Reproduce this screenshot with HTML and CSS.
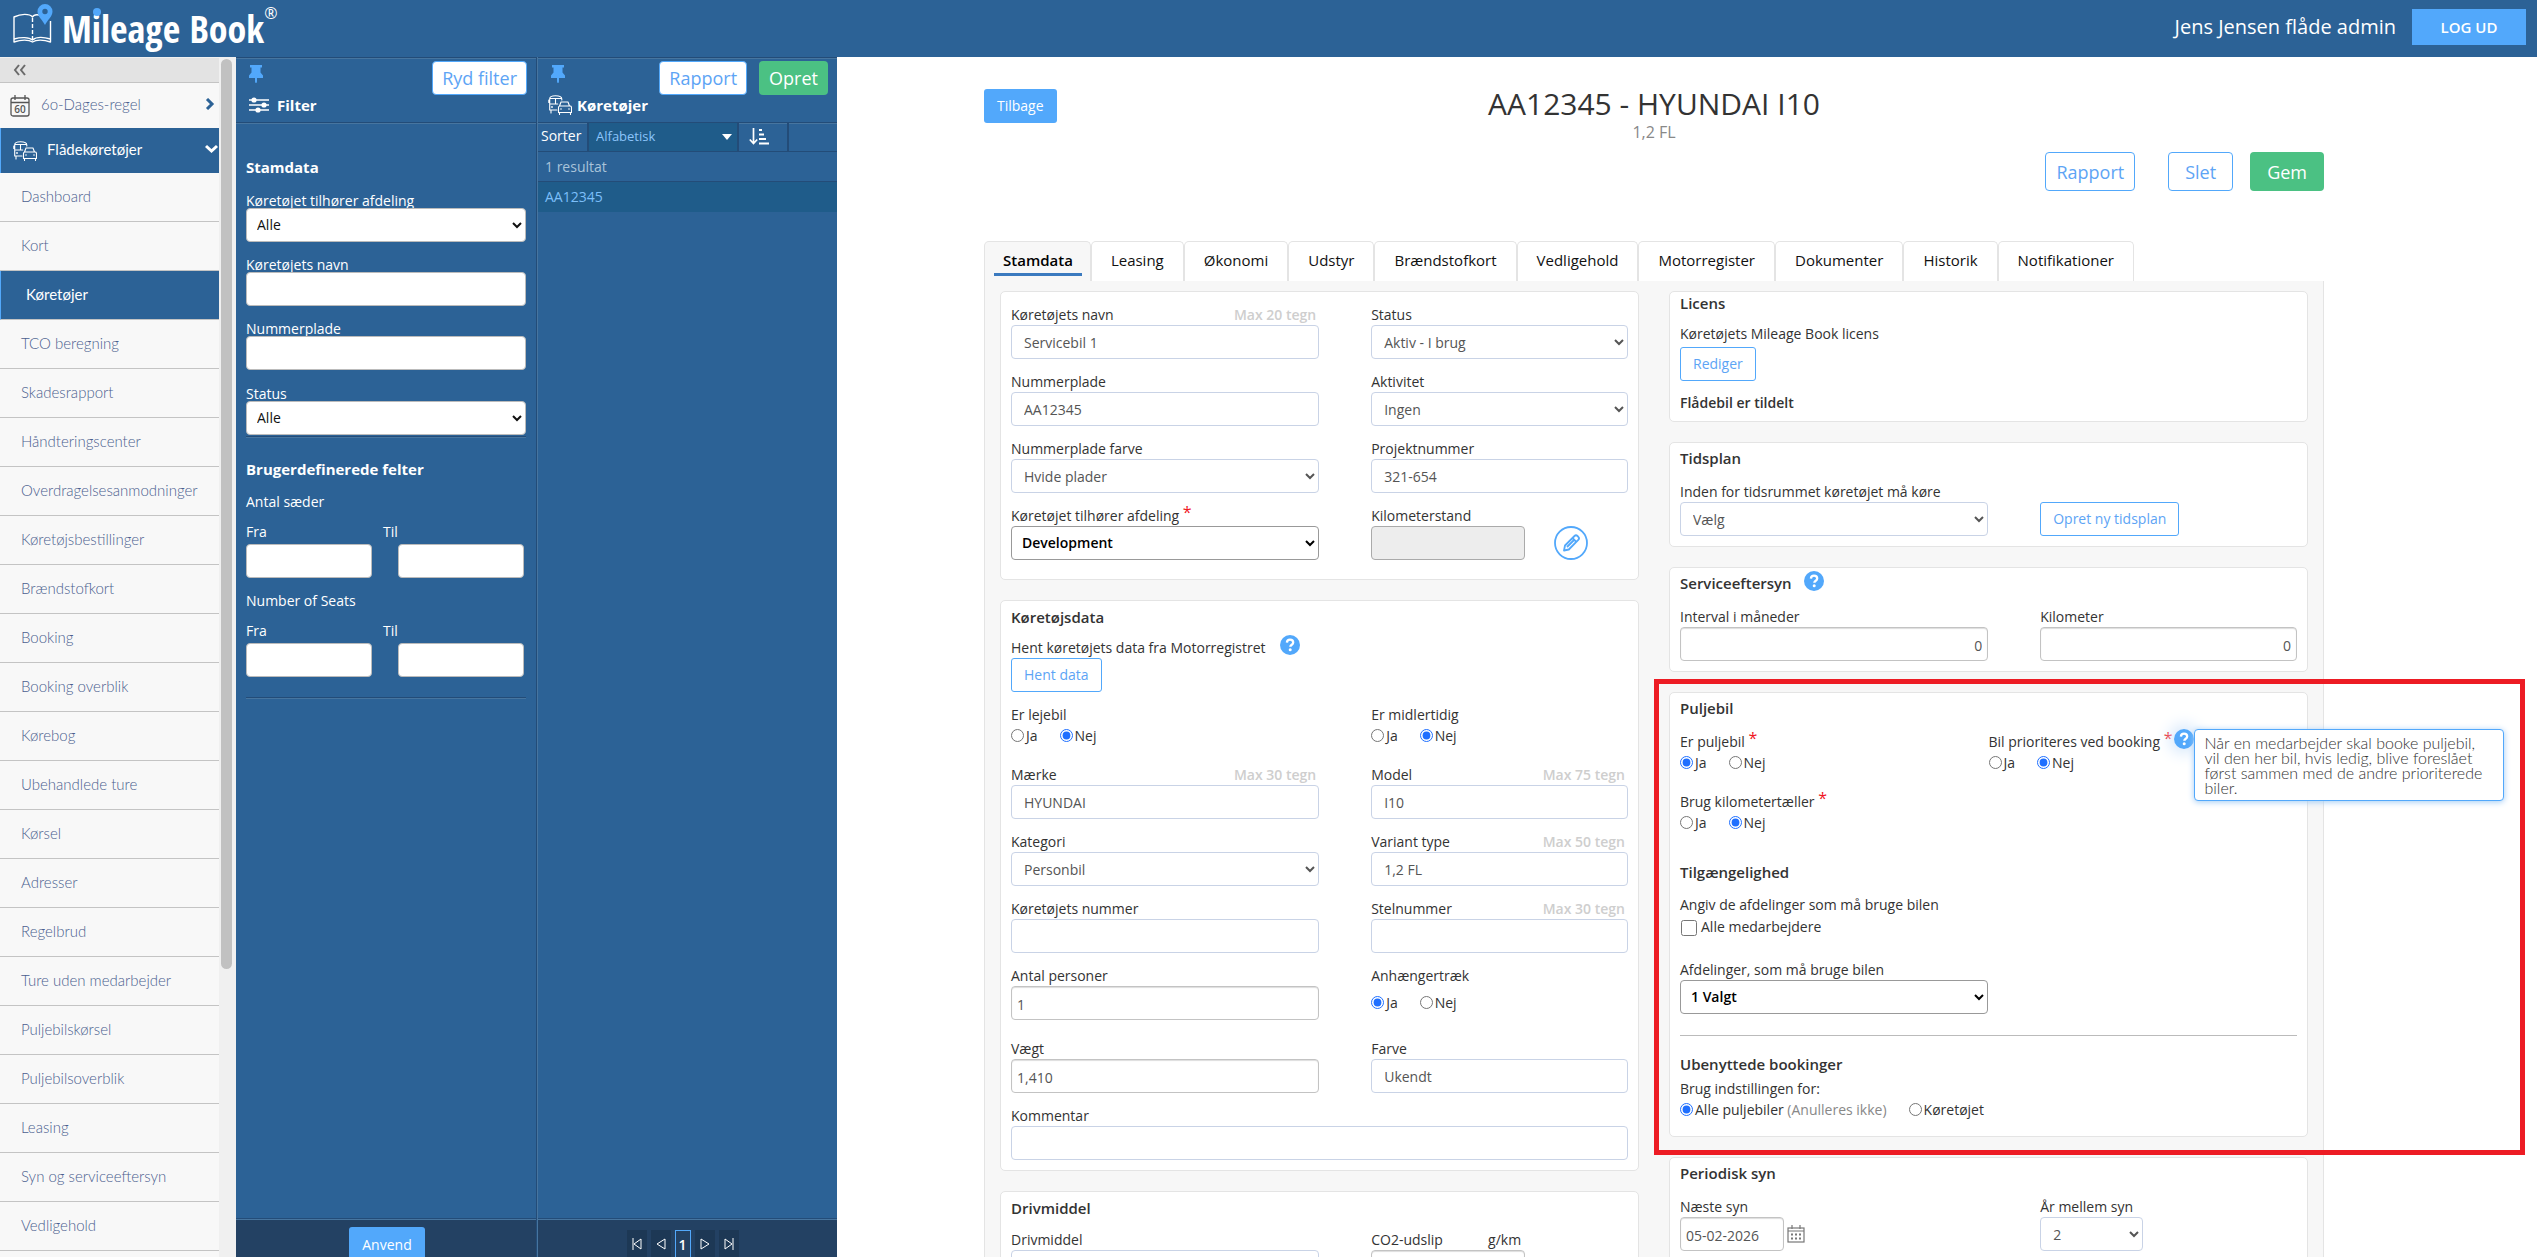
FILE: index.html
```html
<!DOCTYPE html>
<html lang="da">
<head>
<meta charset="utf-8">
<title>Mileage Book - Køretøjer</title>
<meta name="viewport" content="width=device-width, initial-scale=1">
<link rel="stylesheet" href="styles.css">
</head>
<body>
<svg class="defs" aria-hidden="true">
  <symbol id="i-pin" viewBox="0 0 14 18"><path d="M1 0h12v2.500h-1.500v5L14 10.500V13H8v3.500L7.500 18h-1L6 16.500V13H0v-2.500l2.500-3v-5H1z" fill="currentColor"/></symbol>
  <symbol id="i-fleet" viewBox="0 0 24 20"><g fill="none" stroke="currentColor" stroke-width="1.100" stroke-linejoin="round" stroke-linecap="round"><path d="M9 15H1.700V4C1.700 1.500 3 .8 7.500 .8s6.300.7 6.300 3.200V5M1.700 3.500h12M1.700 9h8M7.500 3.500V9M3 15v3M.8 5v2.500"/><path d="M11.500 11l1.500-4h7l1.500 4M10.500 17.500v-5c0-1 .5-1.500 1.500-1.500h10c1 0 1.500.5 1.500 1.500v5zM11.500 18v1.400M22.500 18v1.400"/></g><circle cx="4" cy="12" r=".9" fill="currentColor"/><circle cx="13" cy="14" r=".8" fill="currentColor"/><circle cx="21" cy="14" r=".8" fill="currentColor"/></symbol>
  <symbol id="i-help" viewBox="0 0 20 20"><circle cx="10" cy="10" r="10" fill="#52a8fb"/><path d="M6.900 7.600C7 5.600 8.300 4.700 10 4.700c1.800 0 3.200 1 3.200 2.700 0 2.300-2.900 2.300-2.900 4.400" fill="none" stroke="#fff" stroke-width="2.300"/><circle cx="10.200" cy="14.700" r="1.500" fill="#fff"/></symbol>
</svg>

<header class="topbar">
  <a class="brand" href="#">
    <svg class="brand-mark" viewBox="0 0 40 42" aria-hidden="true">
      <g fill="none" stroke="#fff" stroke-width="1.400" stroke-linejoin="round"><path d="M26 12c-3-.5-5.500 0-6.500 2C16.500 10.500 8 10.500 1 14v25c7-2.500 15-2.500 18.500 0 3.500-2.500 11-2.500 18 0V18"/><path d="M1 36c7-2 15-2 18.500 1 3.500-3 11-3 18-1"/><path d="M19.500 15v21" stroke-dasharray="4 2"/></g>
      <path d="M32 1a7.500 7.500 0 0 0-7.500 7.500C24.500 13.500 29.500 17 32 22c2.500-5 7.500-8.500 7.500-13.500A7.500 7.500 0 0 0 32 1zm0 10.200a2.700 2.700 0 1 1 0-5.400 2.700 2.700 0 0 1 0 5.400z" fill="#52a8fb"/>
    </svg>
    <span class="brand-name">M<span class="brand-i">i</span>leage Book</span><span class="brand-reg">®</span>
  </a>
  <div class="user">
    <span class="user-name">Jens Jensen flåde admin</span>
    <button class="logout" type="button">LOG UD</button>
  </div>
</header>

<div class="shell">
  <nav class="sidebar">
    <div class="menu">
      <button class="collapse" type="button" aria-label="Skjul menu"><svg width="14" height="12" viewBox="0 0 14 12"><path d="M6 1L2 6l4 5M12 1L8 6l4 5" fill="none" stroke="#6b6b6b" stroke-width="2"/></svg></button>
      <a class="group" href="#">
        <svg class="cal60" viewBox="0 0 20 22" aria-hidden="true"><g fill="none" stroke="#555" stroke-width="1.300"><rect x="1" y="3" width="18" height="18" rx="2"/><path d="M1 7.500h18M5 0v5M15 0v5"/></g><text x="10" y="18" text-anchor="middle" class="cal-text">60</text></svg>
        <span>6o-Dages-regel</span>
        <svg class="chev" width="10" height="12" viewBox="0 0 10 12"><path d="M2 1l5 5-5 5" fill="none" stroke="#2c6296" stroke-width="3"/></svg>
      </a>
      <a class="group open" href="#">
        <svg class="fleet" width="24" height="20"><use href="#i-fleet"/></svg>
        <span>Flådekøretøjer</span>
        <svg class="chev" width="13" height="10" viewBox="0 0 13 10"><path d="M1 2l5.500 5L12 2" fill="none" stroke="#fff" stroke-width="3"/></svg>
      </a>
      <a class="item" href="#">Dashboard</a>
      <a class="item" href="#">Kort</a>
      <a class="item current" href="#">Køretøjer</a>
      <a class="item" href="#">TCO beregning</a>
      <a class="item" href="#">Skadesrapport</a>
      <a class="item" href="#">Håndteringscenter</a>
      <a class="item" href="#">Overdragelsesanmodninger</a>
      <a class="item" href="#">Køretøjsbestillinger</a>
      <a class="item" href="#">Brændstofkort</a>
      <a class="item" href="#">Booking</a>
      <a class="item" href="#">Booking overblik</a>
      <a class="item" href="#">Kørebog</a>
      <a class="item" href="#">Ubehandlede ture</a>
      <a class="item" href="#">Kørsel</a>
      <a class="item" href="#">Adresser</a>
      <a class="item" href="#">Regelbrud</a>
      <a class="item" href="#">Ture uden medarbejder</a>
      <a class="item" href="#">Puljebilskørsel</a>
      <a class="item" href="#">Puljebilsoverblik</a>
      <a class="item" href="#">Leasing</a>
      <a class="item" href="#">Syn og serviceeftersyn</a>
      <a class="item" href="#">Vedligehold</a>
      <a class="item" href="#"></a>
    </div>
    <div class="track"><div class="thumb"></div></div>
  </nav>

  <aside class="pane filter">
    <div class="pane-head">
      <div class="pane-tools"><svg class="pin" width="14" height="18"><use href="#i-pin"/></svg><button class="btn outline large" type="button">Ryd filter</button></div>
      <h2><svg width="20" height="16" viewBox="0 0 20 16" aria-hidden="true"><path d="M0 3h20M0 8h20M0 13h20" stroke="#fff" stroke-width="1.500"/><circle cx="5" cy="3" r="2.600" fill="#fff"/><circle cx="15" cy="8" r="2.600" fill="#fff"/><circle cx="9" cy="13" r="2.600" fill="#fff"/></svg>Filter</h2>
    </div>
    <div class="pane-body">
      <h3>Stamdata</h3>
      <div class="ffield"><label for="f-afd">Køretøjet tilhører afdeling</label><select id="f-afd"><option>Alle</option></select></div>
      <div class="ffield"><label for="f-navn">Køretøjets navn</label><input id="f-navn" type="text"></div>
      <div class="ffield"><label for="f-nr">Nummerplade</label><input id="f-nr" type="text"></div>
      <div class="ffield last"><label for="f-st">Status</label><select id="f-st"><option>Alle</option></select></div>
      <hr>
      <h3 class="custom">Brugerdefinerede felter</h3>
      <fieldset class="range"><legend>Antal sæder</legend>
        <div class="range-row"><label for="a-fra">Fra</label><label for="a-til">Til</label></div>
        <div class="range-inputs"><input id="a-fra" type="text"><input id="a-til" type="text"></div>
      </fieldset>
      <fieldset class="range"><legend>Number of Seats</legend>
        <div class="range-row"><label for="b-fra">Fra</label><label for="b-til">Til</label></div>
        <div class="range-inputs"><input id="b-fra" type="text"><input id="b-til" type="text"></div>
      </fieldset>
      <hr class="end">
    </div>
    <div class="pane-foot"><button class="btn solid apply" type="button">Anvend</button></div>
  </aside>

  <aside class="pane list">
    <div class="pane-head">
      <div class="pane-tools"><svg class="pin" width="14" height="18"><use href="#i-pin"/></svg><button class="btn outline large" type="button">Rapport</button><button class="btn green large" type="button">Opret</button></div>
      <h2 class="tight"><svg width="24" height="20"><use href="#i-fleet"/></svg>Køretøjer</h2>
    </div>
    <div class="sortbar">
      <label for="sort">Sorter</label>
      <span class="sortselect"><select id="sort"><option>Alfabetisk</option></select></span>
      <button class="sortdir" type="button" aria-label="Sorteringsretning"><svg width="20" height="18" viewBox="0 0 20 18"><path d="M4.500 0v15M.8 11.500l3.700 4 3.700-4" fill="none" stroke="#fff" stroke-width="1.700"/><path d="M10 2h3M10 6.500h5M10 11h7M10 15.500h10" stroke="#fff" stroke-width="2"/></svg></button>
    </div>
    <div class="count">1 resultat</div>
    <a class="result" href="#">AA12345</a>
    <div class="pane-body"></div>
    <div class="pane-foot pager">
      <button type="button" aria-label="Første"><svg width="10" height="12" viewBox="0 0 10 12"><path d="M1 0v12M9 1v10L2 6z"/></svg></button>
      <button type="button" aria-label="Forrige"><svg width="10" height="12" viewBox="0 0 10 12"><path d="M9 1v10L1 6z"/></svg></button>
      <button class="on" type="button">1</button>
      <button type="button" aria-label="Næste"><svg width="10" height="12" viewBox="0 0 10 12"><path d="M1 1v10l8-5z"/></svg></button>
      <button type="button" aria-label="Sidste"><svg width="10" height="12" viewBox="0 0 10 12"><path d="M9 0v12M1 1v10l7-5z"/></svg></button>
    </div>
  </aside>

  <main class="main">
    <div class="title-row">
      <button class="btn solid back" type="button">Tilbage</button>
      <div class="titles"><h1>AA12345 - HYUNDAI I10</h1><p>1,2 FL</p></div>
    </div>
    <div class="actions">
      <button class="btn outline large" type="button">Rapport</button>
      <button class="btn outline large slet" type="button">Slet</button>
      <button class="btn green large gem" type="button">Gem</button>
    </div>

    <div class="tabs">
      <a class="tab active" href="#"><span>Stamdata</span></a>
      <a class="tab" href="#">Leasing</a>
      <a class="tab" href="#">Økonomi</a>
      <a class="tab" href="#">Udstyr</a>
      <a class="tab" href="#">Brændstofkort</a>
      <a class="tab" href="#">Vedligehold</a>
      <a class="tab" href="#">Motorregister</a>
      <a class="tab" href="#">Dokumenter</a>
      <a class="tab" href="#">Historik</a>
      <a class="tab" href="#">Notifikationer</a>
    </div>

    <div class="panel">
      <div class="col">
        <section class="card basics">
          <div class="row">
            <div class="field"><div class="lab"><label for="navn">Køretøjets navn</label><span class="max">Max 20 tegn</span></div><input id="navn" type="text" value="Servicebil 1"></div>
            <div class="field"><label for="status">Status</label><select id="status"><option>Aktiv - I brug</option></select></div>
          </div>
          <div class="row">
            <div class="field"><label for="plade">Nummerplade</label><input id="plade" type="text" value="AA12345"></div>
            <div class="field"><label for="akt">Aktivitet</label><select id="akt"><option>Ingen</option></select></div>
          </div>
          <div class="row">
            <div class="field"><label for="pfarve">Nummerplade farve</label><select id="pfarve"><option>Hvide plader</option></select></div>
            <div class="field"><label for="proj">Projektnummer</label><input id="proj" type="text" value="321-654"></div>
          </div>
          <div class="row">
            <div class="field"><label for="afd">Køretøjet tilhører afdeling <b class="req">*</b></label><select id="afd" class="strong"><option>Development</option></select></div>
            <div class="field"><label for="km">Kilometerstand</label><div class="km"><input id="km" type="text" disabled><button class="edit" type="button" aria-label="Rediger kilometerstand"><svg width="34" height="34" viewBox="0 0 34 34"><circle cx="17" cy="17" r="16" fill="none" stroke="#52a8fb" stroke-width="1.800"/><g fill="none" stroke="#52a8fb" stroke-width="1.800" stroke-linejoin="round"><path d="M10 24.500l1-5L20.500 10c1-1 2-1 3 0l.8.800c1 1 1 2 0 3L14.800 23.500z"/><path d="M18.500 12l3.800 3.800M13 21l7-7"/></g></svg></button></div></div>
          </div>
        </section>

        <section class="card vehicle">
          <h4>Køretøjsdata</h4>
          <div class="fetch"><div class="lab-help">Hent køretøjets data fra Motorregistret <svg class="help" width="20" height="20"><use href="#i-help"/></svg></div><button class="btn outline" type="button">Hent data</button></div>
          <div class="row choice">
            <fieldset><legend>Er lejebil</legend><div class="radios"><label><input type="radio" name="leje">Ja</label><label><input type="radio" name="leje" checked>Nej</label></div></fieldset>
            <fieldset><legend>Er midlertidig</legend><div class="radios"><label><input type="radio" name="midl">Ja</label><label><input type="radio" name="midl" checked>Nej</label></div></fieldset>
          </div>
          <div class="row">
            <div class="field"><div class="lab"><label for="maerke">Mærke</label><span class="max">Max 30 tegn</span></div><input id="maerke" type="text" value="HYUNDAI"></div>
            <div class="field"><div class="lab"><label for="model">Model</label><span class="max">Max 75 tegn</span></div><input id="model" type="text" value="I10"></div>
          </div>
          <div class="row">
            <div class="field"><label for="kat">Kategori</label><select id="kat"><option>Personbil</option></select></div>
            <div class="field"><div class="lab"><label for="variant">Variant type</label><span class="max">Max 50 tegn</span></div><input id="variant" type="text" value="1,2 FL"></div>
          </div>
          <div class="row">
            <div class="field"><label for="knr">Køretøjets nummer</label><input id="knr" type="text"></div>
            <div class="field"><div class="lab"><label for="stel">Stelnummer</label><span class="max">Max 30 tegn</span></div><input id="stel" type="text"></div>
          </div>
          <div class="row persons">
            <div class="field"><label for="pers">Antal personer</label><input id="pers" class="num" type="text" value="1"></div>
            <fieldset class="tow"><legend>Anhængertræk</legend><div class="radios"><label><input type="radio" name="traek" checked>Ja</label><label><input type="radio" name="traek">Nej</label></div></fieldset>
          </div>
          <div class="row">
            <div class="field"><label for="vaegt">Vægt</label><input id="vaegt" class="num" type="text" value="1,410"></div>
            <div class="field"><label for="farve">Farve</label><input id="farve" type="text" value="Ukendt"></div>
          </div>
          <div class="field"><label for="komm">Kommentar</label><input id="komm" type="text"></div>
        </section>

        <section class="card fuel">
          <h4>Drivmiddel</h4>
          <div class="row">
            <div class="field"><label for="driv">Drivmiddel</label><select id="driv"><option></option></select></div>
            <div class="field co2"><div class="lab"><label for="co2">CO2-udslip</label><span>g/km</span></div><input id="co2" class="num" type="text"></div>
          </div>
        </section>
      </div>

      <div class="col">
        <section class="card licens">
          <h4>Licens</h4>
          <p>Køretøjets Mileage Book licens</p>
          <button class="btn outline" type="button">Rediger</button>
          <p class="granted">Flådebil er tildelt</p>
        </section>

        <section class="card short">
          <h4>Tidsplan</h4>
          <div class="row">
            <div class="field"><label for="tid">Inden for tidsrummet køretøjet må køre</label><select id="tid"><option>Vælg</option></select></div>
            <div class="bottom"><button class="btn outline" type="button">Opret ny tidsplan</button></div>
          </div>
        </section>

        <section class="card short">
          <h4>Serviceeftersyn <svg class="help" width="20" height="20"><use href="#i-help"/></svg></h4>
          <div class="row">
            <div class="field"><label for="intv">Interval i måneder</label><input id="intv" class="num right" type="text" value="0"></div>
            <div class="field"><label for="kilo">Kilometer</label><input id="kilo" class="num right" type="text" value="0"></div>
          </div>
        </section>

        <section class="card pool">
          <h4>Puljebil</h4>
          <div class="halves">
            <fieldset><legend>Er puljebil <b class="req">*</b></legend><div class="radios"><label><input type="radio" name="pulje" checked>Ja</label><label><input type="radio" name="pulje">Nej</label></div></fieldset>
            <fieldset><legend>Bil prioriteres ved booking <b class="req">*</b><span class="tip-anchor"><svg class="help" width="20" height="20"><use href="#i-help"/></svg><span class="tip" role="tooltip">Når en medarbejder skal booke puljebil, vil den her bil, hvis ledig, blive foreslået først sammen med de andre prioriterede biler.</span></span></legend><div class="radios"><label><input type="radio" name="prio">Ja</label><label><input type="radio" name="prio" checked>Nej</label></div></fieldset>
            <fieldset><legend>Brug kilometertæller <b class="req">*</b></legend><div class="radios"><label><input type="radio" name="kmt">Ja</label><label><input type="radio" name="kmt" checked>Nej</label></div></fieldset>
          </div>
          <h4 class="access">Tilgængelighed</h4>
          <p>Angiv de afdelinger som må bruge bilen</p>
          <label class="check"><input type="checkbox">Alle medarbejdere</label>
          <div class="row"><div class="field"><label for="afds">Afdelinger, som må bruge bilen</label><select id="afds" class="strong"><option>1 Valgt</option></select></div></div>
          <hr>
          <h4>Ubenyttede bookinger</h4>
          <p>Brug indstillingen for:</p>
          <div class="radios"><label><input type="radio" name="ubn" checked><span>Alle puljebiler <span class="muted">(Anulleres ikke)</span></span></label><label><input type="radio" name="ubn">Køretøjet</label></div>
          <div class="marker"></div>
        </section>

        <section class="card short">
          <h4>Periodisk syn</h4>
          <div class="row">
            <div class="field date"><label for="syn">Næste syn</label><div class="datebox"><input id="syn" class="num" type="text" value="05-02-2026"><svg width="18" height="18" viewBox="0 0 18 18" aria-hidden="true"><g fill="none" stroke="#777" stroke-width="1.200"><rect x="1" y="3" width="16" height="14"/><path d="M1 6h16M5 0v4M13 0v4"/></g><path d="M4 9.500h10M4 13.500h10" stroke="#777" stroke-width="2" stroke-dasharray="2 2"/></svg></div></div>
            <div class="field years"><label for="aar">År mellem syn</label><select id="aar"><option>2</option></select></div>
          </div>
        </section>
      </div>
    </div>
  </main>
</div>
</body>
</html>
```

FILE: styles.css
```css
*, *::before, *::after { box-sizing: border-box; }

:root {
  --navy: #2c6296;
  --sky: #52a8fb;
  --green: #4bc183;
  --dark-line: #234c78;
  --light-line: #47759f;
}

body {
  margin: 0;
  height: 100vh;
  display: flex;
  flex-direction: column;
  overflow: hidden;
  font: 14px/20px "Open Sans", "Noto Sans", sans-serif;
  color: #333;
  background: #fff;
}

h1, h2, h3, h4, p { margin: 0; font-weight: 400; }
fieldset { margin: 0; padding: 0; border: 0; min-width: 0; }
legend { padding: 0; display: block; height: 20px; white-space: nowrap; }
button, input, select { font: inherit; color: inherit; }
button { cursor: pointer; }
a { text-decoration: none; color: inherit; }
svg { flex: none; }
.defs { position: absolute; width: 0; height: 0; }

/* top bar */
.topbar {
  flex: none;
  height: 57px;
  padding: 0 11px 0 13px;
  display: flex;
  justify-content: space-between;
  background: var(--navy);
  color: #fff;
}
.brand { display: flex; align-items: flex-start; }
.brand-mark { width: 40px; height: 42px; margin-top: 3px; }
.brand-name {
  margin-left: 9px;
  font: 700 38px/56px "Open Sans Condensed", "Liberation Sans Narrow", "Lato", sans-serif;
  white-space: nowrap;
}
.brand-i { position: relative; }
.brand-i::before {
  content: "";
  position: absolute;
  left: 1px;
  top: 6px;
  width: 8px;
  height: 8px;
  border-radius: 50%;
  background: var(--sky);
}
.brand-reg { font: 16px/26px "Open Sans", sans-serif; }
.user { display: flex; align-items: flex-start; gap: 16px; padding-top: 9px; }
.user-name { font-size: 20px; line-height: 36px; }
.logout { width: 114px; height: 36px; border: 0; background: var(--sky); color: #fff; font-weight: 600; font-size: 15px; }

/* layout */
.shell { flex: 1; min-height: 0; display: flex; }

/* menu */
.sidebar { flex: none; width: 236px; display: flex; overflow: hidden; background: #f0f0f0; }
.menu { flex: 1; min-width: 0; padding-top: 1px; font: 300 15px/20px "Lato", sans-serif; color: #4b5f8f; }
.track { flex: none; width: 17px; padding: 2px 4px 0 2px; }
.thumb { height: 76%; border-radius: 6px; background: #c1c1c1; }
.collapse { display: flex; align-items: center; width: 100%; height: 25px; padding: 0 13px; border: 0; border-bottom: 1px solid #c4c4c4; background: #e3e3e3; }
.group { display: flex; align-items: center; height: 45px; padding: 0 4px 3px 10px; background: #f8f8f8; }
.group span { flex: 1; font-size: 15px; }
.cal60 { width: 20px; height: 22px; margin: 4px 11px 0 0; }
.cal-text { font: 600 10px "Open Sans", sans-serif; fill: #555; }
.fleet { margin: 3px 10px 0 0; }
.group.open { padding-right: 1px; border-left: 1px solid var(--sky); background: var(--navy); color: #fff; font-weight: 400; }
.group.open svg.fleet { margin-left: 2px; }
.item { display: block; height: 49px; padding: 13px 0 0 21px; border-bottom: 1px solid #c4c4c4; background: #f8f8f8; white-space: nowrap; }
.item.current { padding-left: 25px; border-left: 1px solid var(--sky); background: var(--navy); color: #fff; font-weight: 400; }

/* blue panes */
.pane { flex: none; display: flex; flex-direction: column; background: var(--navy); color: #fff; }
.filter { width: 301px; border-right: 1px solid var(--dark-line); }
.list { width: 300px; border-left: 1px solid var(--light-line); }
.pane-head { flex: none; height: 66px; padding: 3px 9px 0 13px; border-top: 1px solid var(--dark-line); border-bottom: 1px solid var(--dark-line); box-shadow: inset 0 1px var(--light-line), 0 1px var(--light-line); }
.pane-tools { display: flex; align-items: flex-start; height: 34px; gap: 12px; }
.pin { margin: 4px auto 0 0; color: var(--sky); }
.pane h2 { display: flex; align-items: center; gap: 8px; height: 20px; font-size: 15px; font-weight: 700; }
.pane h2.tight { gap: 5px; margin-left: -3px; }
.pane-body { flex: 1; min-height: 0; overflow: hidden; padding: 34px 10px 0 10px; }
.pane h3 { height: 20px; font-size: 15px; line-height: 20px; font-weight: 700; }
.pane h3.custom { margin-top: 21px; }
.ffield { display: flex; flex-direction: column; height: 64px; }
.pane h3 + .ffield { margin-top: 13px; }
.ffield.last { height: 53px; margin-top: 1px; }
.ffield label { height: 18px; line-height: 22px; }
.ffield input, .ffield select, .range input { width: 100%; height: 34px; border: 1px solid #bbb; border-radius: 4px; background: #fff; color: #111; }
.ffield select { padding: 0 0 2px 6px; }
.pane hr { margin: 0; height: 2px; border: 0; border-top: 1px solid var(--dark-line); background: var(--light-line); }
.pane hr.end { margin-top: 20px; }
.range { margin-top: 13px; }
.range-row { display: grid; grid-template-columns: 137px 1fr; padding-top: 10px; height: 32px; }
.range-inputs { display: grid; grid-template-columns: 1fr 1fr; gap: 26px; padding-right: 2px; }
.pane-foot { flex: none; height: 39px; border-top: 1px solid var(--dark-line); box-shadow: inset 0 1px var(--light-line); background: #234163; padding: 8px 0 0 2px; display: flex; justify-content: center; align-items: flex-start; overflow: hidden; }
.sortbar { flex: none; display: flex; height: 29px; border-bottom: 1px solid var(--dark-line); }
.sortbar label { width: 49px; padding-left: 3px; line-height: 25px; }
.sortselect { position: relative; width: 152px; border: solid var(--dark-line); border-width: 0 2px; background: #1f5c8a; }
.sortselect::after { content: ""; position: absolute; right: 5px; top: 11px; border: 5px solid transparent; border-top: 6px solid #fff; border-bottom: 0; }
.sortselect select { appearance: none; width: 100%; height: 25px; padding: 0 7px; border: 0; background: transparent; color: #8cc5fb; font-size: 13px; }
.sortdir { width: 50px; padding: 4px 0 0 10px; border: 0; border-right: 2px solid var(--dark-line); background: none; text-align: left; }
.count, .result { flex: none; height: 30px; padding-left: 7px; line-height: 30px; }
.count { border-bottom: 1px solid var(--dark-line); color: #a9c4da; }
.result { background: #1f5c8a; color: #7cbff9; }
.pager { gap: 4px; padding: 11px 10px 0 0; }
.pager button { width: 20px; height: 30px; padding: 0; border: 0; background: #1d3855; color: #fff; }
.pager button.on { width: 16px; border: 1px solid var(--sky); background: none; font-weight: 600; }
.pager path { fill: none; stroke: #fff; stroke-width: 1; }

/* buttons */
.btn { height: 34px; padding: 0 12px; border: 1px solid transparent; border-radius: 3px; font-size: 14px; white-space: nowrap; }
.btn.large { font-size: 18px; padding: 0 10px; border-radius: 4px; }
.pane .btn.large { height: 34px; line-height: 28px; padding: 0 9px; }
.btn.outline { border-color: var(--sky); background: #fff; color: #5da4f5; }
.btn.solid { background: var(--sky); color: #fff; }
.btn.green { background: var(--green); color: #fff; }
.pane .btn.apply { height: 36px; padding: 0 12px; }

/* main form */
.main { flex: 1; min-width: 0; overflow-y: auto; scrollbar-width: none; padding: 32px 213px 0 147px; }
.title-row { height: 63px; }
.titles { text-align: center; margin-top: -34px; }
.titles h1 { font-size: 30px; line-height: 30px; }
.titles p { font-size: 16px; line-height: 26px; color: #888; }
.actions { display: flex; justify-content: flex-end; height: 39px; }
.actions .btn { height: 39px; }
.actions .slet { margin: 0 17px 0 33px; padding: 0 16px; }
.actions .gem { padding: 0 16px; }
.tabs { display: flex; margin-top: 50px; height: 40px; }
.tab { padding: 8px 19px 0; border: 1px solid #e4e4e4; border-bottom: 0; border-radius: 5px 5px 0 0; font-size: 15px; color: #111; white-space: nowrap; }
.tab.active { padding: 8px 8px 0 9px; background: #f7f7f7; font-weight: 600; color: #000; }
.tab.active span { display: block; height: 26px; padding: 0 9px; border-bottom: 3px solid #3b7abf; }
.panel { display: grid; grid-template-columns: 1fr 1fr; gap: 30px; padding: 10px 15px; border: solid #e4e4e4; border-width: 0 1px; background: #f7f7f7; }
.col { display: flex; flex-direction: column; gap: 20px; min-width: 0; }
.card { position: relative; padding: 6px 10px 10px; border: 1px solid #e4e4e4; border-radius: 5px; background: #fff; }
.card.basics { padding: 13px 10px 6px; }
.card h4 { display: flex; align-items: center; gap: 12px; height: 20px; font-size: 15px; font-weight: 600; }
.row { display: grid; grid-template-columns: 6fr 5fr; column-gap: 52px; height: 67px; }
.field { display: flex; flex-direction: column; min-width: 0; height: 54px; }
.field > label, .lab { height: 20px; white-space: nowrap; }
.lab { display: flex; justify-content: space-between; }
.max { padding-right: 3px; color: #cecece; font-weight: 600; }
.req { color: #f0141e; font-weight: 400; font-size: 16px; line-height: 10px; vertical-align: 3px; }
.field input, .field select { width: 100%; height: 34px; border: 1px solid #c9d3e6; border-radius: 4px; background: #fff; color: #555; padding: 0 12px; }
.field select { padding: 0 0 0 8px; }
.field input.num { padding: 2px 5px 0; border-color: #c3c3c3; box-shadow: inset 0 1px 1px #ddd; }
.field input.right { text-align: right; }
.field select.strong { border-color: #999; color: #000; font-weight: 600; padding: 0 0 2px 6px; }
.km { display: flex; gap: 29px; }
.field .km input { width: 154px; border-color: #aaa; background: #ededed; }
.edit { width: 34px; height: 34px; padding: 0; border: 0; background: none; }
.vehicle .fetch { margin-top: 11px; height: 67px; }
.lab-help { display: flex; gap: 14px; height: 20px; line-height: 20px; }
.lab-help .help { margin-top: -3px; }
.choice { height: 60px; }
.radios { display: flex; gap: 22px; height: 20px; line-height: 22px; white-space: nowrap; }
.radios label { display: flex; gap: 2px; }
.radios input { width: 13px; height: 13px; margin: 4px 0 0; accent-color: #1f6fff; }
.persons { height: 73px; }
.tow .radios { margin-top: 6px; }
.fuel { padding-bottom: 0; }
.fuel .row { margin-top: 12px; }
.co2 .lab { width: 154px; padding-right: 4px; }
.field.co2 input { width: 154px; }
.licens { height: 131px; padding-top: 1px; }
.licens p { margin-top: 11px; height: 22px; line-height: 20px; }
.licens .btn { margin-top: 1px; }
.licens p.granted { margin-top: 12px; font-weight: 600; }
.short .row { margin-top: 14px; height: 54px; }
.card.short { height: 105px; padding-top: 5px; }
.short .help { margin-top: -4px; }
.bottom { padding-top: 20px; }
.pool { height: 445px; padding-top: 5px; z-index: 1; }
.halves { display: grid; grid-template-columns: 1fr 1fr; grid-auto-rows: 60px; margin-top: 14px; }
.pool h4.access { margin-top: 10px; }
.pool h4.access + p { margin-top: 13px; }
.check { display: flex; gap: 4px; height: 24px; line-height: 24px; margin-bottom: 21px; }
.check input { width: 16px; height: 16px; margin: 5px 0 0 1px; }
.pool hr { margin: 8px 0 18px; border: 0; border-top: 1px solid #bbb; }
.pool hr + h4 + p { margin-top: 5px; }
.muted { color: #888; }
.tip-anchor { position: relative; display: inline-block; width: 20px; height: 20px; margin-left: 2px; vertical-align: top; border-radius: 50%; box-shadow: 0 0 16px 4px #d3e6fb; top: -3px; }
.tip-anchor .help { display: block; }
.tip {
  position: absolute;
  left: 20px;
  top: 0;
  width: 310px;
  height: 72px;
  padding: 5px 19px 5px 9px;
  border: 1px solid var(--sky);
  border-radius: 4px;
  background: #fff;
  box-shadow: 0 1px 6px #9fcbf5;
  font: 300 16px/15px "Lato", sans-serif;
  white-space: normal;
}
.marker { position: absolute; left: -16px; right: -218px; top: -14px; bottom: -19px; border: 5px solid #ed1c24; pointer-events: none; }
.datebox { display: flex; align-items: center; gap: 3px; }
.field .datebox input { width: 104px; }
.field.years select { width: 103px; }
```
